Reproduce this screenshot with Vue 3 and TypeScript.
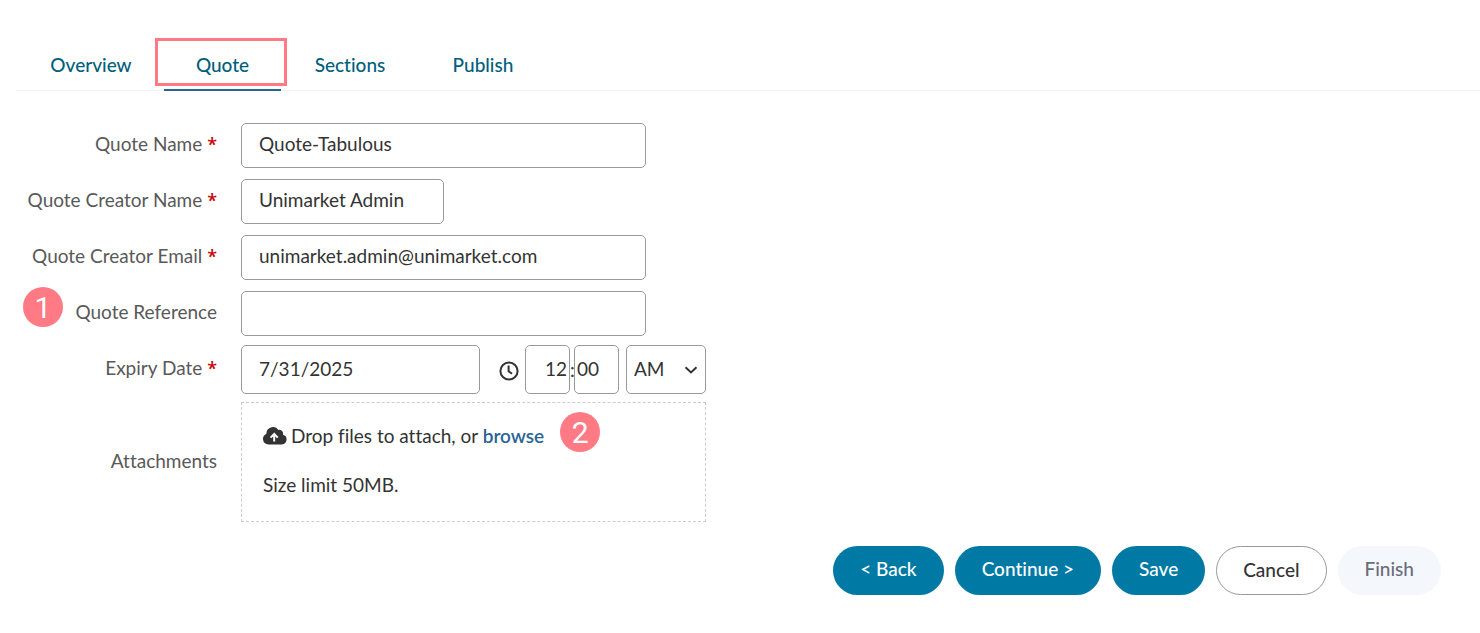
<script setup lang="ts">
import { ref } from 'vue'

interface Field {
  id: string
  label: string
  required: boolean
  type: string
  short?: boolean
  step?: number
}

const tabs = ['Overview', 'Quote', 'Sections', 'Publish']
const active = ref('Quote')

const fields: Field[] = [
  { id: 'name', label: 'Quote Name', required: true, type: 'text' },
  { id: 'creator', label: 'Quote Creator Name', required: true, type: 'text', short: true },
  { id: 'email', label: 'Quote Creator Email', required: true, type: 'email' },
  { id: 'reference', label: 'Quote Reference', required: false, type: 'text', step: 1 },
]
const values = ref<Record<string, string>>({
  name: 'Quote-Tabulous',
  creator: 'Unimarket Admin',
  email: 'unimarket.admin@unimarket.com',
  reference: '',
})
const expiry = ref('7/31/2025')
const hour = ref('12')
const minute = ref('00')
const meridiem = ref('AM')
</script>

<template>
  <main class="page">
    <nav class="tabs">
      <a
        v-for="tab in tabs"
        :key="tab"
        href="#"
        class="tab"
        :class="{ active: tab === active }"
        @click.prevent="active = tab"
      >{{ tab }}<span v-if="tab === 'Quote'" class="marker"></span></a>
    </nav>

    <form class="form" @submit.prevent>
      <div v-for="f in fields" :key="f.id" class="row">
        <label :for="f.id" class="label">
          <span v-if="f.step" class="badge step-one">{{ f.step }}</span>{{ f.label }}
          <span v-if="f.required" class="req">*</span>
        </label>
        <input :id="f.id" v-model="values[f.id]" :type="f.type" class="box" :class="{ short: f.short }" />
      </div>

      <div class="row expiry">
        <label for="expiry" class="label">Expiry Date <span class="req">*</span></label>
        <div class="when">
          <input id="expiry" v-model="expiry" type="text" class="box date" />
          <svg class="clock" viewBox="0 0 20 20" aria-hidden="true">
            <circle cx="10" cy="10" r="8.6" />
            <path d="M9.6 4.6V10.2L13 12.8" />
          </svg>
          <input v-model="hour" type="text" class="box time hour" aria-label="Hour" />
          <span class="colon">:</span>
          <input v-model="minute" type="text" class="box time minute" aria-label="Minute" />
          <span class="select">
            <select v-model="meridiem" class="box" aria-label="AM or PM">
              <option>AM</option>
              <option>PM</option>
            </select>
            <svg class="chevron" viewBox="0 0 14 8" aria-hidden="true"><path d="M1.5 1.2L7 6.4L12.5 1.2" /></svg>
          </span>
        </div>
      </div>

      <div class="row attachments">
        <span class="label">Attachments</span>
        <div class="drop">
          <p>
            <svg class="cloud" viewBox="0 0 24 18" aria-hidden="true">
              <path
                class="shape"
                d="M5.4 17.4A5.4 5.4 0 0 1 3.4 7A6.6 6.6 0 0 1 15.4 2.9A4 4 0 0 1 20 7.8A4.9 4.9 0 0 1 18.9 17.4Z"
              />
              <path class="arrow" d="M11.2 14.4V7M7.6 10.6L11.2 7L14.8 10.6" />
            </svg>
            <span>Drop files to attach, or <a href="#" class="browse" @click.prevent>browse</a></span>
            <span class="badge step-two">2</span>
          </p>
          <p>Size limit 50MB.</p>
        </div>
      </div>
    </form>

    <footer class="actions">
      <button type="button" class="btn primary">&lt; Back</button>
      <button type="button" class="btn primary">Continue &gt;</button>
      <button type="button" class="btn primary">Save</button>
      <button type="button" class="btn outline">Cancel</button>
      <button type="button" class="btn" disabled>Finish</button>
    </footer>
  </main>
</template>

<style>
body {
  background: #fff;
}
</style>

<style scoped>
* {
  box-sizing: border-box;
}
.page {
  padding: 40px 0 38px 16px;
  color: #333;
  font-family: Lato, 'Open Sans', sans-serif;
  font-size: 19px;
  font-variant-ligatures: none;
  line-height: 24px;
}
.tabs {
  display: grid;
  grid-template-columns: 146px 117px 138px 128px;
  padding-left: 2px;
  border-bottom: 1px solid #f4f4f4;
}
.tab {
  position: relative;
  height: 51px;
  padding-top: 13px;
  margin-bottom: -1px;
  color: #005f7c;
  font-weight: 500;
  text-align: center;
  text-decoration: none;
}
.tab.active {
  border-bottom: 2px solid #2a6496;
}
.marker {
  position: absolute;
  top: -2px;
  left: -9px;
  width: 132px;
  height: 48px;
  border: 3px solid #ff7a85;
}
.form {
  display: flex;
  flex-direction: column;
  gap: 11px;
  padding-top: 32px;
}
.row {
  display: grid;
  grid-template-columns: 201px 1fr;
  column-gap: 24px;
  align-items: center;
}
.label {
  position: relative;
  padding-bottom: 3px;
  color: #595959;
  text-align: right;
  white-space: nowrap;
}
.req {
  color: #c80000;
  font-family: 'Open Sans', sans-serif;
  font-size: 18px;
  font-weight: 600;
  line-height: 20px;
}
.box {
  width: 405px;
  height: 45px;
  padding: 0 17px 4px;
  border: 1px solid #999;
  border-radius: 5px;
  background: #fff;
  color: #333;
  font: inherit;
  font-variant-ligatures: none;
  outline: none;
}
.short {
  width: 203px;
}
.expiry {
  margin-top: -2px;
}
.when {
  display: flex;
  align-items: center;
}
.when .box {
  height: 49px;
  padding-bottom: 2px;
}
.when .date {
  width: 239px;
}
.clock {
  width: 20px;
  height: 20px;
  margin: 3px 6px 0 19px;
  fill: none;
  stroke: #333;
  stroke-width: 2;
}
.when .time {
  width: 45px;
  padding-right: 0;
}
.when .hour {
  padding-left: 19px;
}
.when .minute {
  padding-left: 2px;
}
.colon {
  width: 4px;
  text-align: center;
}
.select {
  position: relative;
  margin-left: 7px;
}
.select .box {
  display: block;
  width: 80px;
  padding: 0 7px 2px;
  appearance: none;
}
.chevron {
  position: absolute;
  top: 21px;
  right: 8px;
  width: 14px;
  height: 8px;
  fill: none;
  stroke: #333;
  stroke-width: 2;
  pointer-events: none;
}
.attachments {
  margin-top: -3px;
}
.drop {
  display: flex;
  flex-direction: column;
  gap: 25px;
  width: 465px;
  height: 120px;
  padding: 21px;
  border: 1px dashed #ccc;
}
.drop p {
  display: flex;
  align-items: center;
  gap: 4px;
  height: 24px;
  margin: 0;
}
.cloud {
  width: 24px;
  height: 18px;
}
.shape {
  fill: #333;
}
.arrow {
  fill: none;
  stroke: #fff;
  stroke-width: 2;
}
.browse {
  color: #2a6496;
  font-weight: 600;
  text-decoration: none;
}
.badge {
  display: inline-flex;
  align-items: center;
  justify-content: center;
  width: 40px;
  height: 40px;
  padding-top: 2px;
  border-radius: 50%;
  background: #ff7a85;
  color: #fff;
  font: 30px/38px Roboto, Arial, sans-serif;
}
.step-one {
  position: absolute;
  top: -13px;
  left: 7px;
}
.step-two {
  margin: -8px 0 0 12px;
}
.actions {
  display: flex;
  justify-content: flex-end;
  gap: 11px;
  padding: 24px 39px 0 0;
}
.btn {
  height: 49px;
  padding: 0 26px 3px;
  border: 1px solid transparent;
  border-radius: 25px;
  background: #f4f8fc;
  color: #6b6b7b;
  font: inherit;
  font-variant-ligatures: none;
  font-weight: 500;
}
.primary {
  background: #007aa5;
  color: #fff;
}
.outline {
  padding-bottom: 1px;
  border-color: #999;
  background: #fff;
  color: #333;
}
</style>
